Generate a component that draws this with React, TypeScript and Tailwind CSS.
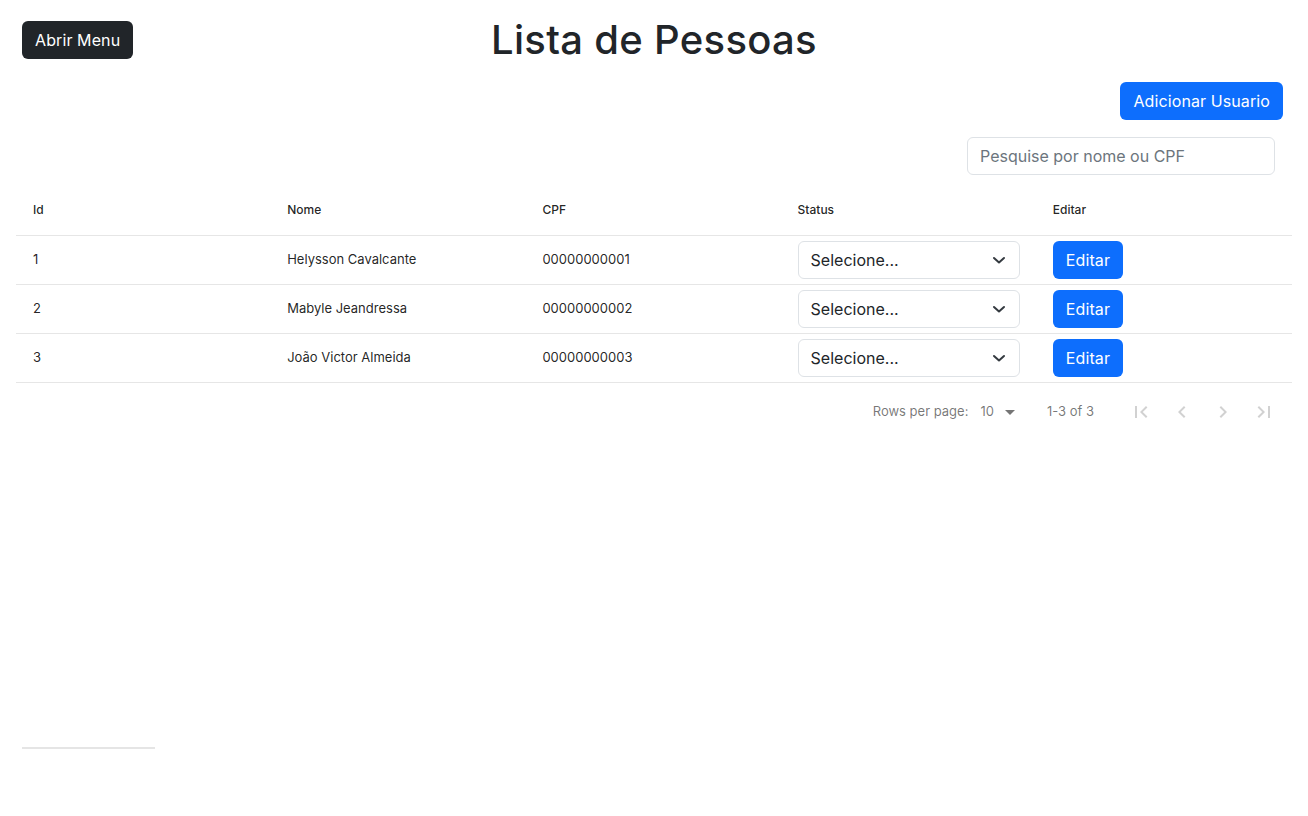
import { useState } from "react";

type Pessoa = { id: number; nome: string; cpf: string };

const pessoas: Pessoa[] = [
    { id: 1, nome: "Helysson Cavalcante", cpf: "00000000001" },
    { id: 2, nome: "Mabyle Jeandressa", cpf: "00000000002" },
    { id: 3, nome: "João Victor Almeida", cpf: "00000000003" },
];

const Chevron = () => (
    <svg className="h-3 w-4" viewBox="0 0 16 12" fill="none" stroke="#343a40" strokeWidth="2" strokeLinecap="round" strokeLinejoin="round">
        <path d="M3 4 8 8.5 13 4" />
    </svg>
);

const PageIcon = ({ d }: { d: string }) => (
    <button type="button" disabled className="flex h-10 w-10 items-center justify-center">
        <svg className="h-6 w-6" viewBox="0 0 24 24" fill="rgba(0,0,0,0.18)">
            <path d={d} />
        </svg>
    </button>
);

const App = () => {
    const [busca, setBusca] = useState("");

    return (
        <div className="min-h-[816px] bg-white text-[#212529] font-['Inter',sans-serif]">
            {/* topo */}
            <div className="grid grid-cols-[1fr_auto_1fr] items-center pt-4 px-[22px]">
                <div>
                    <button type="button" className="h-[38px] rounded-md bg-[#212529] px-[13px] text-base tracking-[0.1px] text-white">
                        Abrir Menu
                    </button>
                </div>
                <h1 className="text-[40px] leading-[48px] font-medium tracking-[0.3px]">Lista de Pessoas</h1>
                <div />
            </div>

            <div className="flex justify-end pr-[25px] mt-[18px]">
                <button type="button" className="h-[38px] rounded-md bg-[#0d6efd] px-[13px] text-base tracking-[0.1px] text-white">
                    Adicionar Usuario
                </button>
            </div>

            <div className="flex justify-end pr-[33px] mt-[17px]">
                <input
                    value={busca}
                    onChange={(e) => setBusca(e.target.value)}
                    placeholder="Pesquise por nome ou CPF"
                    className="h-[38px] w-[308px] rounded-md border border-[#dee2e6] px-3 text-base outline-none placeholder:text-[#6c757d]"
                />
            </div>

            {/* tabela */}
            <div className="mx-4 mt-[9px]">
                <div className="grid h-[52px] grid-cols-5 items-center border-b border-[#e6e6e6] text-xs font-medium text-[rgba(0,0,0,0.87)]">
                    <div className="pl-[17px]">Id</div>
                    <div className="pl-4">Nome</div>
                    <div className="pl-4">CPF</div>
                    <div className="pl-4">Status</div>
                    <div className="pl-4">Editar</div>
                </div>
                {pessoas.map((p) => (
                    <div key={p.id} className="grid h-[49px] grid-cols-5 items-center border-b border-[#e6e6e6] text-[13px] text-[rgba(0,0,0,0.87)]">
                        <div className="pl-[17px]">{p.id}</div>
                        <div className="pl-4">{p.nome}</div>
                        <div className="pl-4">{p.cpf}</div>
                        <div className="pl-4">
                            <div className="flex h-[38px] w-[222px] items-center justify-between rounded-md border border-[#dee2e6] pl-3 pr-3 text-base text-[#212529]">
                                <span>Selecione...</span>
                                <Chevron />
                            </div>
                        </div>
                        <div className="pl-4">
                            <button type="button" className="h-[38px] rounded-md bg-[#0d6efd] px-[13px] text-base tracking-[0.1px] text-white">
                                Editar
                            </button>
                        </div>
                    </div>
                ))}

                {/* paginação */}
                <div className="flex h-[57px] items-center justify-end pr-2 text-[13px] text-[rgba(0,0,0,0.54)]">
                    <span>Rows per page:</span>
                    <div className="ml-3 flex items-center">
                        <span>10</span>
                        <svg className="ml-1 h-6 w-6" viewBox="0 0 24 24" fill="rgba(0,0,0,0.54)">
                            <path d="M7 10l5 5 5-5z" />
                        </svg>
                    </div>
                    <span className="ml-[25px] mr-[27px]">1-3 of 3</span>
                    <div className="flex gap-[1px]">
                        <PageIcon d="M18.41 16.59L13.82 12l4.59-4.59L17 6l-6 6 6 6zM6 6h2v12H6z" />
                        <PageIcon d="M15.41 7.41L14 6l-6 6 6 6 1.41-1.41L10.83 12z" />
                        <PageIcon d="M8.59 16.59L13.17 12 8.59 7.41 10 6l6 6-6 6-1.41-1.41z" />
                        <PageIcon d="M5.59 7.41L10.18 12l-4.59 4.59L7 18l6-6-6-6zM16 6h2v12h-2z" />
                    </div>
                </div>
            </div>

            <div className="ml-[22px] mt-[307px] h-[2px] w-[133px] bg-[#e5e5e5]" />
        </div>
    );
};

export default App;
